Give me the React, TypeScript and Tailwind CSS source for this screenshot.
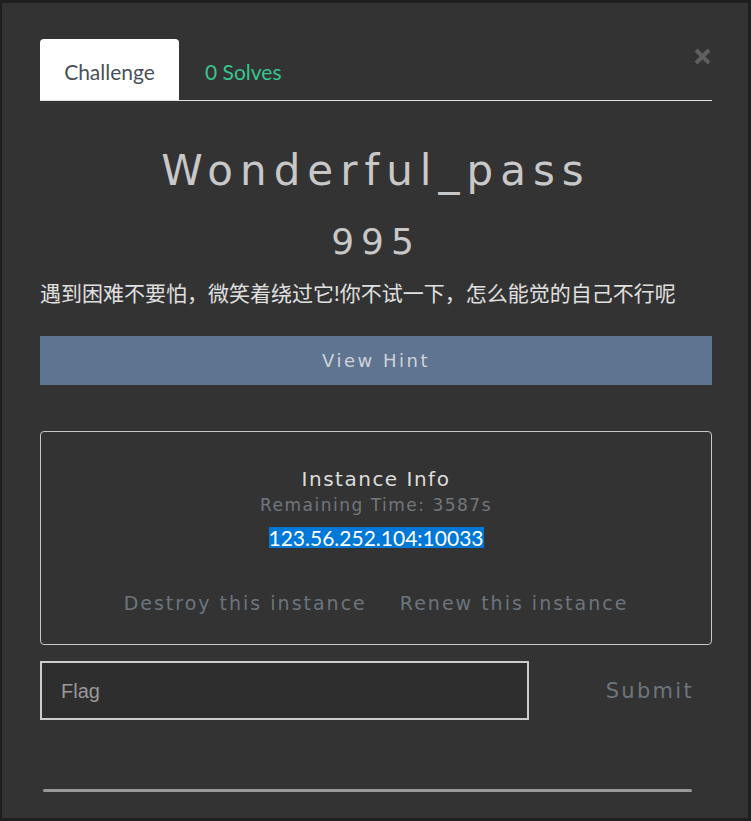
export default function App() {
  return (
    <div className="w-[751px] h-[821px] bg-[#1f1f1f] p-[3px] pl-[2px] overflow-hidden">
      <div className="relative h-full bg-[#333333] pl-[38px] pr-[36px] pt-[36px]">
        {/* close button */}
        <button className="absolute right-[37px] top-[45px] text-[#5f5f5f]">
          <svg width="17" height="17" viewBox="0 0 17 17" fill="none" stroke="currentColor" strokeWidth="4" strokeLinecap="butt">
            <path d="M2 2 L15 15 M15 2 L2 15" />
          </svg>
        </button>

        {/* tabs */}
        <div className="flex h-[62px] border-b border-[#dee2e6] font-['Lato',sans-serif]">
          <div className="flex items-center justify-center pt-[4px] w-[139px] bg-white rounded-t-[4px] text-[21px] text-[#495057]">
            Challenge
          </div>
          <div className="flex items-center pt-[4px] pl-[26px] text-[21px] text-[#37c590]">0 Solves</div>
        </div>

        {/* title */}
        <div className="mt-[44px] h-[50px] flex items-center justify-center text-[42px] text-[#c8c8c8] tracking-[7px] font-['DejaVu_Sans',sans-serif]">
          Wonderful_pass
        </div>
        <div className="mt-[27px] h-[40px] flex items-center justify-center text-[36px] text-[#c8c8c8] tracking-[7px] font-['DejaVu_Sans',sans-serif]">
          995
        </div>
        <div className="mt-[18px] h-[26px] flex items-center text-[21px] text-[#e0e0e0] font-['Lato','Noto_Sans_CJK_SC',sans-serif]">
          遇到困难不要怕，微笑着绕过它!你不试一下，怎么能觉的自己不行呢
        </div>

        {/* hint */}
        <button className="mt-[30px] w-full h-[49px] bg-[#5e7491] text-[#cfd3d8] text-[18px] tracking-[2.5px] font-['DejaVu_Sans',sans-serif]">
          View Hint
        </button>

        {/* instance info */}
        <div className="mt-[46px] h-[214px] border border-[#c8c8c8] rounded-[4px] flex flex-col items-center font-['DejaVu_Sans',sans-serif]">
          <div className="mt-[34px] h-[26px] flex items-center text-[20px] text-[#dddddd] tracking-[1.5px]">
            Instance Info
          </div>
          <div className="mt-[2px] h-[24px] flex items-center text-[17px] text-[#72777c] tracking-[1.5px]">
            Remaining Time: 3587s
          </div>
          <div className="mt-[9px] h-[21px] flex items-center bg-[#0078d7] text-white text-[21px] font-['Lato',sans-serif]">
            123.56.252.104:10033
          </div>
          <div className="mt-[41px] flex gap-[33px] text-[19px] text-[#6c757d] tracking-[2px]">
            <span>Destroy this instance</span>
            <span>Renew this instance</span>
          </div>
        </div>

        {/* flag submit */}
        <div className="mt-[16px] flex items-center">
          <div className="w-[489px] h-[59px] border-2 border-[#cccccc] bg-[#2e2e2e] flex items-center pl-[19px] text-[20px] text-[#999999] font-['Liberation_Sans',sans-serif]">
            Flag
          </div>
          <div className="flex-1 flex justify-end pt-[2px] pr-[18px] text-[21px] text-[#6c757d] tracking-[2.3px] font-['DejaVu_Sans',sans-serif]">
            Submit
          </div>
        </div>

        {/* bottom rule */}
        <div className="mt-[69px] ml-[3px] w-[649px] h-[3px] rounded-full bg-[#999999]" />
      </div>
    </div>
  );
}
